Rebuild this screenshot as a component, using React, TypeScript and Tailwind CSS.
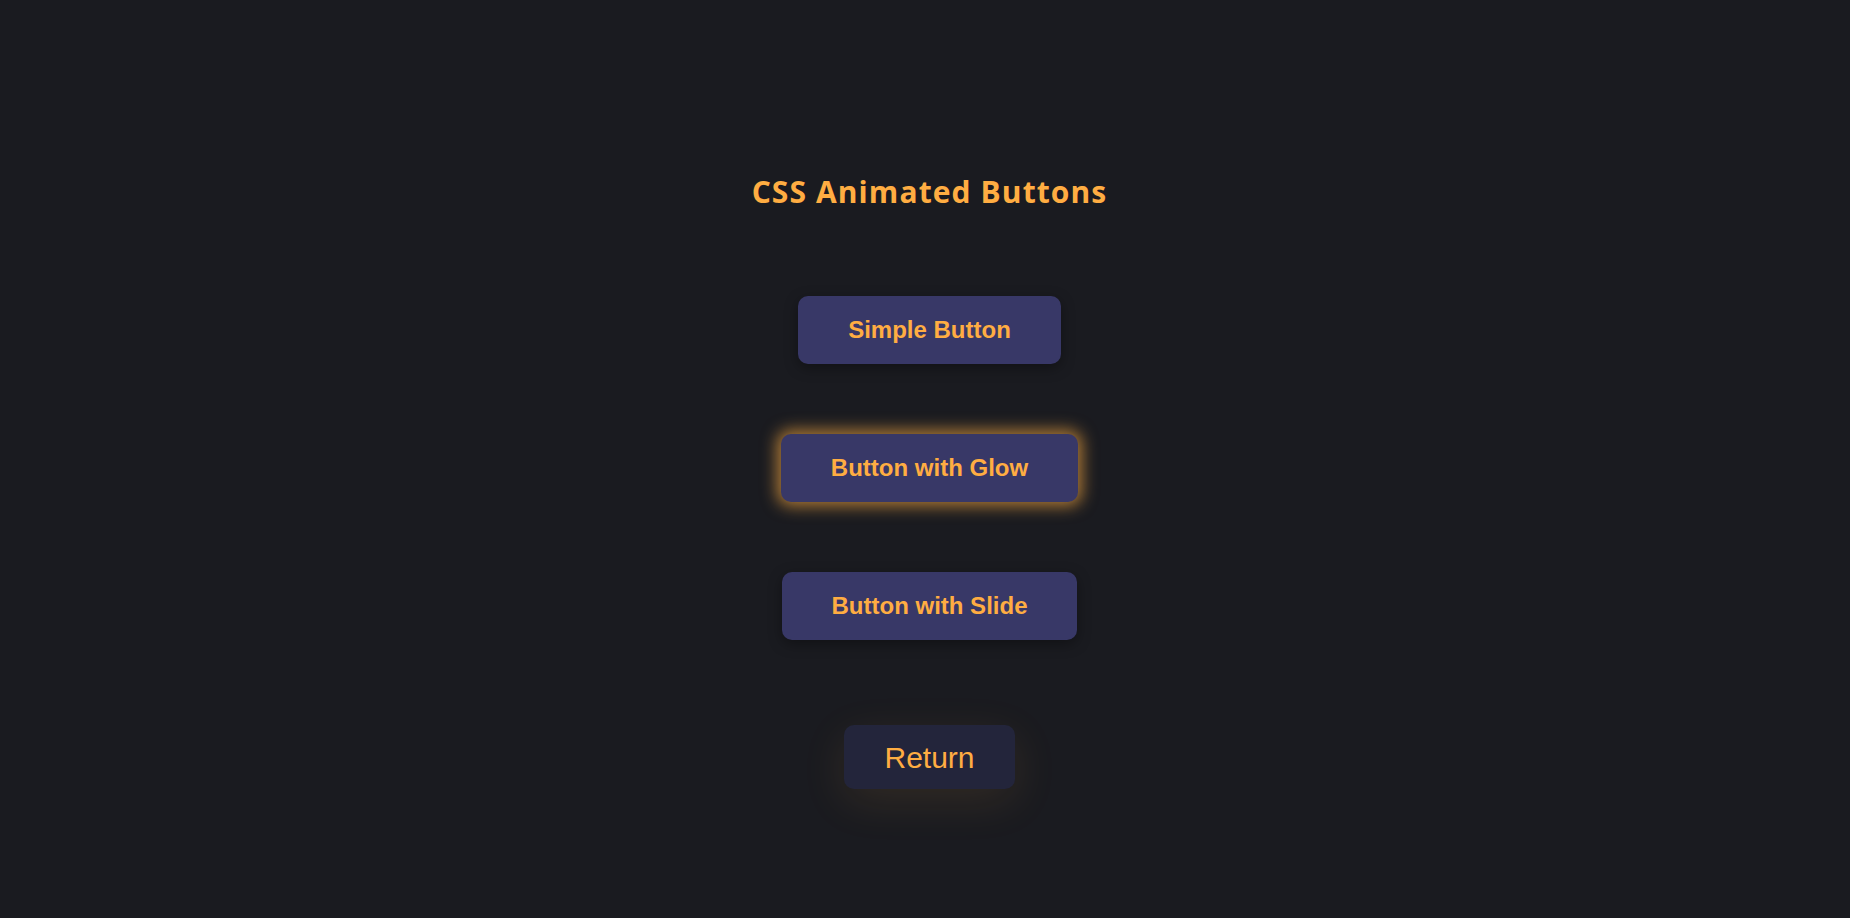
export default function App() {
  const btn =
    "rounded-[10px] bg-[#383867] text-[#ffad42] text-[24px] font-bold leading-[28px] py-[20px] [font-family:'Liberation_Sans',Arial,sans-serif]";

  return (
    <div className="min-h-screen bg-[#1a1b20] flex flex-col items-center pt-[175px] pl-[9px]">
      <h1 className="text-[30px] leading-[34px] font-bold tracking-[1.1px] text-[#ffad42] [font-family:'Open_Sans',sans-serif]">
        CSS Animated Buttons
      </h1>

      <div className="mt-[87px] flex flex-col items-center gap-[70px]">
        <button className={`${btn} w-[263px] shadow-[0_4px_14px_rgba(0,0,0,0.35)]`}>Simple Button</button>
        <button className={`${btn} w-[297px] shadow-[0_0_16px_4px_rgba(255,173,66,0.65)]`}>
          Button with Glow
        </button>
        <button className={`${btn} w-[295px] shadow-[0_4px_14px_rgba(0,0,0,0.35)]`}>Button with Slide</button>
      </div>

      <button className="mt-[85px] w-[171px] h-[64px] rounded-[10px] bg-[#23253b] text-[#ffad42] text-[30px] [font-family:'Liberation_Sans',Arial,sans-serif] shadow-[0_12px_45px_rgba(255,173,66,0.1)]">
        Return
      </button>
    </div>
  );
}
